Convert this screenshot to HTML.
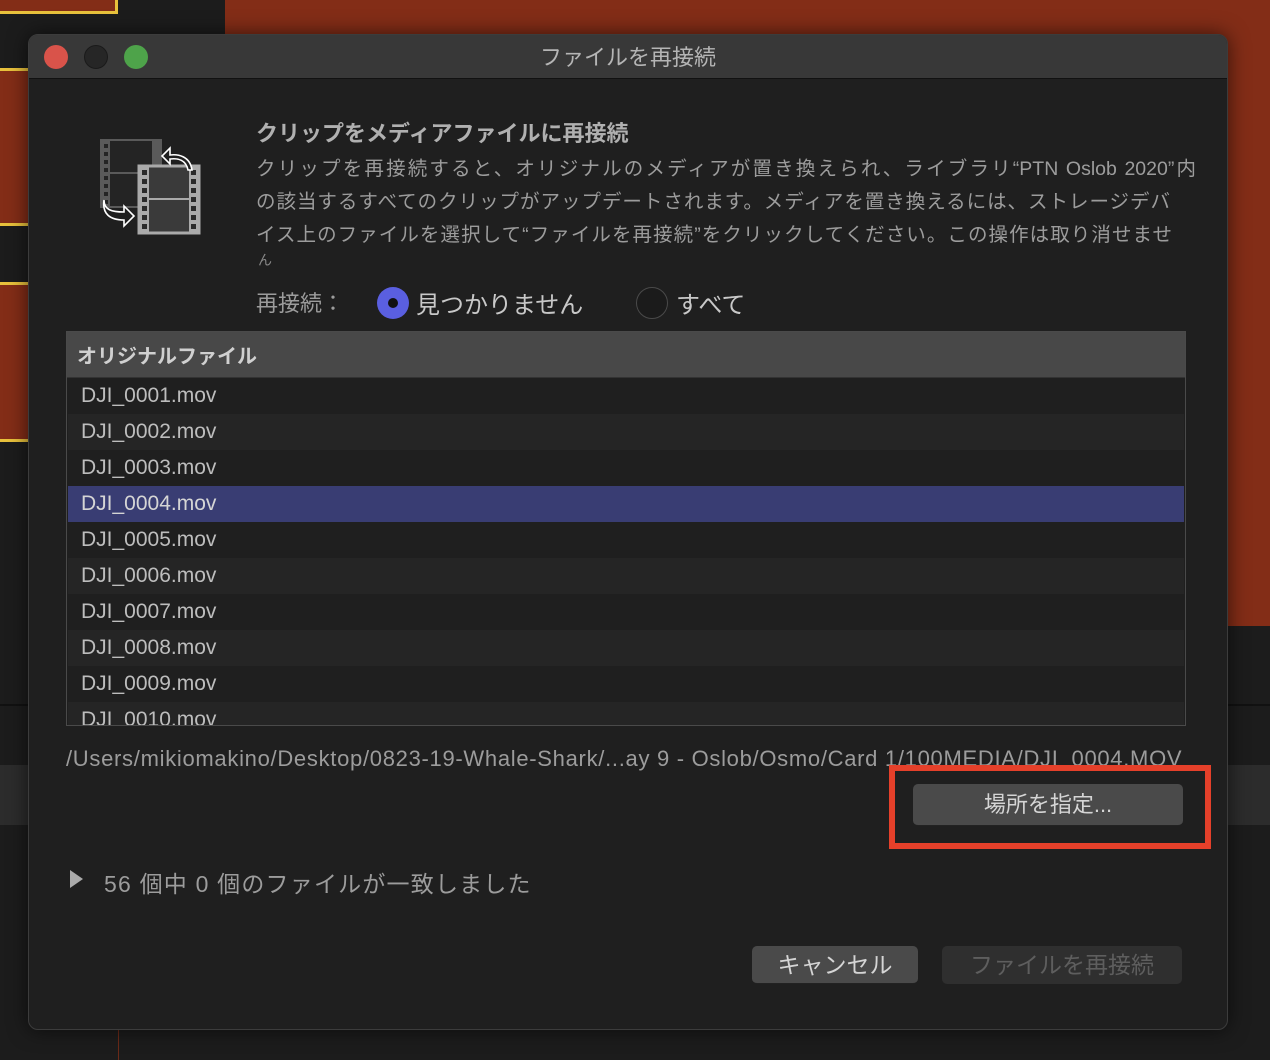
<!DOCTYPE html>
<html><head><meta charset="utf-8"><style>
*{margin:0;padding:0;box-sizing:border-box}
body{width:1270px;height:1060px;background:#1c1c1c;position:relative;overflow:hidden;font-family:"Liberation Sans","Noto Sans CJK JP",sans-serif;color:#a8a8a8}
.a{position:absolute}
.t{white-space:nowrap}
.row{position:absolute;left:1px;right:1px;height:36px;font-size:21px;color:#bdbdbd;padding-left:13px;line-height:36px}
.ln{position:absolute;left:256px;font-size:19.5px;color:#9c9c9c;white-space:nowrap;text-align:justify;text-align-last:justify}
</style></head><body>
<div class="a" style="left:225px;top:0;width:1045px;height:626px;background:#832d17"></div>
<div class="a" style="left:0;top:0;width:118px;height:14px;background:#832d17;border:3px solid #e8c13c;border-top:none;border-left:none"></div>
<div class="a" style="left:0;top:68px;width:30px;height:158px;background:#832d17;border-top:3px solid #e8c13c;border-bottom:3px solid #e8c13c"></div>
<div class="a" style="left:0;top:282px;width:30px;height:160px;background:#832d17;border-top:3px solid #e8c13c;border-bottom:3px solid #e8c13c"></div>
<div class="a" style="left:0;top:704px;width:1270px;height:2px;background:#111"></div>
<div class="a" style="left:0;top:765px;width:1270px;height:60px;background:#2c2c2c"></div>
<div class="a" style="left:118px;top:1028px;width:1px;height:32px;background:#6b2a18"></div>

<div class="a" style="left:28px;top:34px;width:1200px;height:996px;background:#1f1f1f;border:1px solid #3c3c3c;border-radius:10px;overflow:hidden;box-shadow:0 0 20px rgba(0,0,0,.6)">
 <div class="a" style="left:0;top:0;width:100%;height:44px;background:#383838;border-bottom:1px solid #111"></div>
 <div class="a" style="left:15px;top:10px;width:24px;height:24px;border-radius:50%;background:#d9534a"></div>
 <div class="a" style="left:55px;top:10px;width:24px;height:24px;border-radius:50%;background:#262626;border:1px solid #1a1a1a"></div>
 <div class="a" style="left:95px;top:10px;width:24px;height:24px;border-radius:50%;background:#4ea34a"></div>
 <div class="a t" style="left:0;width:100%;top:5px;text-align:center;font-size:22px;color:#b5b5b5">ファイルを再接続</div>
</div>

<svg class="a" style="left:98px;top:138px" width="106" height="98" viewBox="0 0 106 98">
 <rect x="3" y="2" width="60" height="67" fill="#242424" stroke="#5a5a5a" stroke-width="2"/>
 <rect x="4" y="3" width="8" height="65" fill="#5a5a5a"/><rect x="54" y="3" width="8" height="65" fill="#5a5a5a"/>
 <g fill="#242424"><rect x="6" y="6" width="4" height="4"/><rect x="6" y="14" width="4" height="4"/><rect x="6" y="22" width="4" height="4"/><rect x="6" y="30" width="4" height="4"/><rect x="6" y="38" width="4" height="4"/><rect x="6" y="46" width="4" height="4"/><rect x="6" y="54" width="4" height="4"/><rect x="6" y="62" width="4" height="4"/></g>
 <line x1="12" y1="35" x2="54" y2="35" stroke="#5a5a5a" stroke-width="2"/>
 <rect x="41" y="28" width="60" height="67" fill="#3a3a3a" stroke="#aaa" stroke-width="3"/>
 <rect x="42" y="29" width="9" height="65" fill="#aaa"/><rect x="91" y="29" width="9" height="65" fill="#aaa"/>
 <g fill="#2a2a2a"><rect x="44" y="32" width="5" height="5"/><rect x="44" y="41" width="5" height="5"/><rect x="44" y="50" width="5" height="5"/><rect x="44" y="59" width="5" height="5"/><rect x="44" y="68" width="5" height="5"/><rect x="44" y="77" width="5" height="5"/><rect x="44" y="86" width="5" height="5"/>
 <rect x="93" y="32" width="5" height="5"/><rect x="93" y="41" width="5" height="5"/><rect x="93" y="50" width="5" height="5"/><rect x="93" y="59" width="5" height="5"/><rect x="93" y="68" width="5" height="5"/><rect x="93" y="77" width="5" height="5"/><rect x="93" y="86" width="5" height="5"/></g>
 <line x1="51" y1="61" x2="91" y2="61" stroke="#aaa" stroke-width="2"/>
 <path d="M94 32 C92 18 80 16 72 17 L72 10 L64 18 L72 26 L72 21 C80 20 88 22 90 32 Z" fill="#1f1f1f" stroke="#fff" stroke-width="1.6"/>
 <path d="M6 62 C6 72 14 74 26 74 L26 68 L36 78 L26 88 L26 82 C12 82 4 76 6 62 Z" fill="#1f1f1f" stroke="#fff" stroke-width="1.6"/>
</svg>

<div class="a t" style="left:256px;top:116px;font-size:22px;font-weight:bold;color:#b0b0b0">クリップをメディアファイルに再接続</div>
<div class="ln" style="top:152px;width:940px">クリップを再接続すると、オリジナルのメディアが置き換えられ、ライブラリ“PTN Oslob 2020”内</div>
<div class="ln" style="top:185px;width:914px">の該当するすべてのクリップがアップデートされます。メディアを置き換えるには、ストレージデバ</div>
<div class="ln" style="top:218px;width:916px">イス上のファイルを選択して“ファイルを再接続”をクリックしてください。この操作は取り消せませ</div>
<div class="a t" style="left:258px;top:250px;font-size:14px;color:#888">ん</div>

<div class="a t" style="left:256px;top:286px;font-size:22px;color:#9c9c9c">再接続：</div>
<div class="a" style="left:377px;top:287px;width:32px;height:32px;border-radius:50%;background:#5a5fe0"></div>
<div class="a" style="left:388px;top:298px;width:10px;height:10px;border-radius:50%;background:#111"></div>
<div class="a t" style="left:416px;top:285px;font-size:24px;color:#c8c8c8">見つかりません</div>
<div class="a" style="left:636px;top:287px;width:32px;height:32px;border-radius:50%;border:1.5px solid #4a4a4a;background:#1b1b1b"></div>
<div class="a t" style="left:676px;top:285px;font-size:24px;color:#c8c8c8">すべて</div>

<div class="a" style="left:66px;top:331px;width:1120px;height:395px;border:1px solid #4a4a4a;background:#1f1f1f;overflow:hidden">
 <div class="a" style="left:0;top:0;right:0;height:46px;background:#484848;border-bottom:1px solid #333"></div>
 <div class="a t" style="left:10px;top:8px;font-size:20px;font-weight:bold;color:#d0d0d0">オリジナルファイル</div>
 <div class="row" style="top:46px;background:#1f1f1f">DJI_0001.mov</div>
 <div class="row" style="top:82px;background:#252525">DJI_0002.mov</div>
 <div class="row" style="top:118px;background:#1f1f1f">DJI_0003.mov</div>
 <div class="row" style="top:154px;background:#393d73;color:#d5d5d5">DJI_0004.mov</div>
 <div class="row" style="top:190px;background:#1f1f1f">DJI_0005.mov</div>
 <div class="row" style="top:226px;background:#252525">DJI_0006.mov</div>
 <div class="row" style="top:262px;background:#1f1f1f">DJI_0007.mov</div>
 <div class="row" style="top:298px;background:#252525">DJI_0008.mov</div>
 <div class="row" style="top:334px;background:#1f1f1f">DJI_0009.mov</div>
 <div class="row" style="top:370px;background:#252525">DJI_0010.mov</div>
</div>

<div class="a t" style="left:66px;top:746px;font-size:22px;letter-spacing:0.7px;color:#9c9c9c;width:1120px;overflow:hidden">/Users/mikiomakino/Desktop/0823-19-Whale-Shark/...ay 9 - Oslob/Osmo/Card 1/100MEDIA/DJI_0004.MOV</div>

<div class="a" style="left:889px;top:765px;width:322px;height:84px;border:6px solid #e5402a"></div>
<div class="a t" style="left:913px;top:784px;width:270px;height:42px;background:#4a4a4a;border-radius:5px;border-bottom:1px solid #222;text-align:center;line-height:42px;font-size:22px;color:#d5d5d5">場所を指定...</div>

<div class="a" style="left:70px;top:870px;width:0;height:0;border-top:9px solid transparent;border-bottom:9px solid transparent;border-left:13px solid #aaa"></div>
<div class="a t" style="left:104px;top:865px;font-size:23px;letter-spacing:1.2px;color:#9c9c9c">56 個中 0 個のファイルが一致しました</div>

<div class="a t" style="left:752px;top:946px;width:166px;height:38px;background:#4a4a4a;border-radius:5px;border-bottom:1px solid #222;text-align:center;line-height:38px;font-size:23px;color:#d5d5d5">キャンセル</div>
<div class="a t" style="left:942px;top:946px;width:240px;height:38px;background:#2f2f2f;border-radius:5px;text-align:center;line-height:38px;font-size:23px;color:#5e5e5e">ファイルを再接続</div>
</body></html>
